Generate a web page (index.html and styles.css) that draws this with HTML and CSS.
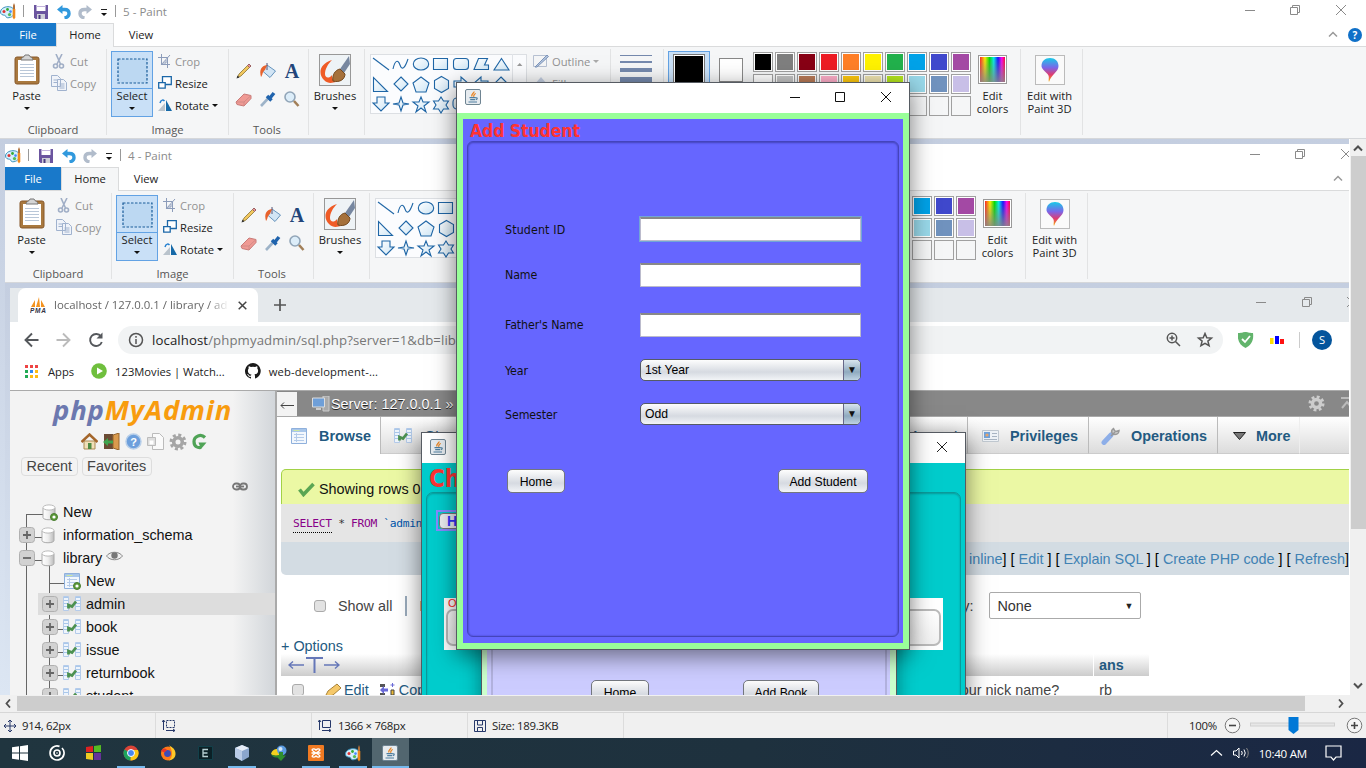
FILE: index.html
```html
<!DOCTYPE html>
<html lang="en">
<head>
<meta charset="utf-8">
<title>5 - Paint</title>
<link rel="stylesheet" href="styles.css">
</head>
<body>
<svg class="defs" width="0" height="0">
  <defs>
    <linearGradient id="gBlue" x1="0" y1="0" x2="1" y2="1"><stop offset="0" stop-color="#fff"/><stop offset="1" stop-color="#cfe6f5"/></linearGradient>
    <linearGradient id="gRain" x1="0" x2="1" y1="0" y2="0"><stop offset="0" stop-color="#f22"/><stop offset=".2" stop-color="#fe0"/><stop offset=".38" stop-color="#0d0"/><stop offset=".55" stop-color="#0ee"/><stop offset=".72" stop-color="#11f"/><stop offset=".87" stop-color="#f0e"/><stop offset="1" stop-color="#f03"/></linearGradient>
    <linearGradient id="gGrey" x1="0" x2="0" y1="0" y2="1"><stop offset="0" stop-color="#888" stop-opacity="0"/><stop offset="1" stop-color="#888" stop-opacity=".85"/></linearGradient>
    <linearGradient id="g3d" x1="0" x2="0" y1="0" y2="1"><stop offset="0" stop-color="#18cbe8"/><stop offset=".4" stop-color="#7b66e8"/><stop offset=".7" stop-color="#e23b6e"/><stop offset="1" stop-color="#f7b500"/></linearGradient>
    <linearGradient id="gCyl" x1="0" x2="1" y1="0" y2="0"><stop offset="0" stop-color="#fff"/><stop offset=".5" stop-color="#eee"/><stop offset="1" stop-color="#bbb"/></linearGradient>
  </defs>
  <symbol id="paint" viewBox="0 0 17 17"><path d="M.5 9C.5 6 4 3.700 8 3.700s6.500 2 6.500 5.300-3 5.800-6.800 5.800c-2.200 0-1.400-2.200-3-2.500C2.500 12 .5 11.500.5 9z" fill="#d5effc" stroke="#3c93bd"/><circle cx="4" cy="8.500" r="1.500" fill="#d33"/><circle cx="7.500" cy="6.500" r="1.400" fill="#3a3"/><circle cx="10.500" cy="8.600" r="1.300" fill="#48f"/><circle cx="9.500" cy="11.600" r="1.600" fill="#5b5"/><path d="M13 6V2.500l1-2.500 1 2.500V6z" fill="#b0703a"/><path d="M12.700 6h2.600v8.500l-1.300 2-1.300-2z" fill="#f08a1c"/></symbol>
  <symbol id="save" viewBox="0 0 14 14"><path d="M0 0h14v14H1.500L0 12.500z" fill="#6b559f"/><path d="M2.500 0h9v6h-9z" fill="#fff"/><path d="M2.500 1h9v1h-9z" fill="#c3b3dd"/><path d="M3 9h8v5H3z" fill="#cfd0d8"/><path d="M4.500 10h2v4h-2z" fill="#483a80"/></symbol>
  <symbol id="undo" viewBox="0 0 14 14"><path d="M3 4.500h4.500c3.500 0 4.500 2 4.500 4 0 2.500-2 4-4.500 4.500" fill="none" stroke="currentColor" stroke-width="3.400"/><path d="M0 4.500 5.500 0v9z" fill="currentColor"/></symbol>
  <symbol id="java" viewBox="0 0 16 16"><rect x=".5" y=".5" width="15" height="15" rx="1.500" fill="#e6ebef" stroke="#6f8492"/><path d="M9 2.500c.5 2-3.500 2.500-2 5M10.800 4.500C8 5.500 9.500 6 8.500 7.800" fill="none" stroke="#e8801c" stroke-width="1.300"/><path d="M4.500 8.700h6.200M5.200 10.700h5M3.500 13h8.500M10.700 9c2-.8 2 1.300.2 1.700" fill="none" stroke="#4f7fa0" stroke-width="1.200"/></symbol>
  <symbol id="cyl" viewBox="0 0 15 17"><path d="M1 4v9.500C1 16.500 13 16.500 13 13.500V4z" fill="url(#gCyl)" stroke="#aaa"/><ellipse cx="7" cy="3.500" rx="6" ry="2.600" fill="#fff" stroke="#bbb"/></symbol>
  <symbol id="tbl" viewBox="0 0 17 17"><path d="M.5.5h15v15H.5z" fill="#f2f7fd" stroke="#8fb0dc"/><path d="M1 1h14v3H1z" fill="#a8c6ea"/><path d="M3 6.500h10M3 9.500h10M3 12.500h10M5.500 5v9" stroke="#b4cbe9"/><path d="M2.500 2.500h6" stroke="#cde8a0"/></symbol>
  <symbol id="addb" viewBox="0 0 8 8"><circle cx="4" cy="4" r="3.500" fill="#5b9a3a" stroke="#4a7d2f"/><circle cx="4" cy="4" r="1.600" fill="#fff"/></symbol>
  <symbol id="rel" viewBox="0 0 18 16"><path d="M.5.5h5v14h-5zM12.500.5h5v14h-5z" fill="#eef4fc" stroke="#b4cbea"/><path d="M1 4.500h4M1 7.500h4M1 10.500h4M13 4.500h4M13 7.500h4M13 10.500h4M1 1.500h4M13 1.500h4" stroke="#a9c8ea"/><path d="M5.500 12.500V9l3.500 1.500 4-5" fill="none" stroke="#4c9150" stroke-width="2.800"/></symbol>
  <symbol id="plus" viewBox="0 0 16 16"><rect x=".5" y=".5" width="15" height="15" rx="3" fill="#d2d2d2" stroke="#b0b0b0"/><path d="M4 8h8M8 4v8" stroke="#666" stroke-width="1.800"/></symbol>
  <symbol id="minus" viewBox="0 0 16 16"><rect x=".5" y=".5" width="15" height="15" rx="3" fill="#d2d2d2" stroke="#b0b0b0"/><path d="M4 8h8" stroke="#666" stroke-width="1.800"/></symbol>
  <symbol id="gear" viewBox="0 0 18 18"><circle cx="9" cy="9" r="7" fill="none" stroke="currentColor" stroke-width="3" stroke-dasharray="3 2.500"/><circle cx="9" cy="9" r="4.300" fill="none" stroke="currentColor" stroke-width="3.600"/></symbol>
</svg>

<template id="paint-top">
  <div class="titlebar">
    <svg class="i-paint" width="17" height="17"><use href="#paint"/></svg>
    <span class="bar b1"></span>
    <svg class="i-save" width="14" height="14"><use href="#save"/></svg>
    <svg class="i-undo" width="14" height="14"><use href="#undo"/></svg>
    <svg class="i-redo" width="14" height="14" viewBox="0 0 14 14"><g transform="matrix(-1 0 0 1 14 0)"><use href="#undo" width="14" height="14"/></g></svg>
    <svg class="i-more" width="8" height="8"><path d="M1 .5h6" stroke="#222"/><path d="M1 4h6L4 7z" fill="#111"/></svg>
    <span class="bar b2"></span>
    <span class="wtitle"></span>
    <svg class="wctl" width="102" height="12" fill="none" stroke="#8a8a8a"><path d="M0 6.500h10M45.500 3.500h7v7h-7zM47.500 3V1.500h7v7h-2M91 1l10 10M101 1 91 11"/></svg>
  </div>
  <div class="tabs"><span class="tab file">File</span><span class="tab home">Home</span><span class="tab view">View</span>
    <span class="tabright"><svg width="10" height="7"><path d="M1 5.500 5 1.500 9 5.500" fill="none" stroke="#999" stroke-width="1.500"/></svg><span class="help">?</span></span></div>
  <div class="ribbon">
    <div class="grp g-clip"><div class="body">
      <div class="big paste"><svg width="26" height="32" viewBox="0 0 26 32"><rect x="1" y="3" width="24" height="27" rx="2" fill="#a9793f" stroke="#87592a"/><path d="M4 6h18v21H4z" fill="#fff"/><path d="M6 10.500h14M6 13.500h14M6 16.500h14M6 19.500h14M6 22.500h14" stroke="#b9c7d8"/><path d="M7 6c0-3 3-2 4-5h4c1 3 4 2 4 5z" fill="#d5d5d5" stroke="#777"/></svg><span>Paste</span><i class="dn"></i></div>
      <div class="col dim"><div class="item"><svg width="16" height="15" viewBox="0 0 16 15" fill="none" stroke="#a0aec6" stroke-width="1.600"><path d="M5 0 9.500 10M11 0 6 10"/><circle cx="4.500" cy="12" r="2"/><circle cx="10.500" cy="12" r="2"/></svg>Cut</div><div class="item"><svg width="16" height="16" viewBox="0 0 16 16" fill="#f0f3f9" stroke="#a0b2ce"><path d="M.5.500h6l3 3v8h-9zM6.500 4.500h6l3 3v8h-9z"/><path d="M2.500 5h4M2.500 7.500h4M8.500 9h5M8.500 11h5M8.500 13h5"/></svg>Copy</div></div>
    </div><div class="cap">Clipboard</div></div>
    <div class="grp g-img"><div class="body">
      <div class="big select"><div class="selicon"><svg width="31" height="26"><rect x="1" y="1" width="29" height="24" fill="#bcd8f2" stroke="#1a5c99" stroke-width="1.200" stroke-dasharray="2.500 1.500"/></svg></div><span>Select</span><i class="dn"></i></div>
      <div class="col"><div class="item dim"><svg width="14" height="14" viewBox="0 0 14 14" fill="none" stroke="#8c9cba"><path d="M3.500 0v10.500H12M0 3.500h9.500V14M3 11 12 1M5 9h3V6"/></svg>Crop</div><div class="item"><svg width="14" height="14" viewBox="0 0 14 14" fill="#fff" stroke="#1b67a8" stroke-width="1.300"><path d="M4.500.7h8.800v7.800H4.500z"/><path d="M.7 6.700h6.500v5.500H.7z"/></svg>Resize</div><div class="item"><svg width="14" height="14" viewBox="0 0 14 14"><path d="M0 13 7 5v8z" fill="#b9c3cc"/><path d="M8 2v11h6z" fill="#1569a8"/><path d="M2 5C3 1 5.500 2 6.500 3" fill="none" stroke="#2680d0" stroke-width="1.500"/></svg>Rotate<i class="dn"></i></div></div>
    </div><div class="cap">Image</div></div>
    <div class="grp g-tools"><div class="body tools">
      <svg width="18" height="18" viewBox="0 0 18 18"><path d="M2.500 15.500 4 12 12.500 3.500l2 2L6 14z" fill="#f1c75e" stroke="#8a7434" stroke-width=".8"/><path d="m12.500 3.500 1.500-1.500 2 2-1.500 1.500z" fill="#e79a9a" stroke="#9b6060"/><path d="m1.500 16.500 1-3 2 2z" fill="#333"/></svg>
      <svg width="18" height="18" viewBox="0 0 18 18"><path d="M8 3 16.500 9 11 15.500 3.500 9z" fill="#d2e5f5" stroke="#6694bd"/><path d="M8 1v7" stroke="#557"/><path d="M8 3C2 4 0 8 2 15c2-2 1-5 4-7z" fill="#e8622c"/></svg>
      <span class="A">A</span>
      <svg width="18" height="18" viewBox="0 0 18 18"><path d="m1 12 8-8 7 1.500v3L9 16l-7-1.500z" fill="#ef9a94" stroke="#c97b78"/><path d="M2 12h7v3.500M9 12l7-6.500" fill="none" stroke="#d28a86"/></svg>
      <svg width="18" height="18" viewBox="0 0 18 18"><path d="M2 16 9.500 8" stroke="#9db3c8" stroke-width="2.600"/><path d="m8 6 4.500 4.500M10.500 8.500 15 3" stroke="#1f63ad" stroke-width="3.500"/></svg>
      <svg width="18" height="18" viewBox="0 0 18 18"><circle cx="7" cy="7" r="5" fill="#dcedf9" stroke="#91a5b8" stroke-width="1.600"/><path d="m11 11 4.500 5" stroke="#a27f58" stroke-width="2.600"/></svg>
    </div><div class="cap">Tools</div></div>
    <div class="grp g-brush"><div class="big"><svg width="33" height="33" viewBox="0 0 33 33"><rect x=".5" y=".5" width="31" height="31" fill="#eef3f6" stroke="#989898"/><path d="M13 6C0 10-1 20 5 26c4 4 8 3 12 2-3-2-4-4-4-7-3 4-7 3-7-1C6 15 9 10 13 6z" fill="#ef5b26"/><path d="M30 2 21 15l4 4 6-9z" fill="#7787a0"/><path d="M14 27c-1-6 2-11 7-12l5 5c0 5-5 9-12 7z" fill="#a5713c" stroke="#74491f"/></svg><span>Brushes</span><i class="dn"></i></div></div>
    <div class="grp g-shapes"><svg class="gallery" width="157" height="60" viewBox="0 0 157 60"><rect x=".5" y=".5" width="156" height="59" fill="#fbfcfe" stroke="#dcdfe3"/><path d="M142.500 0v60" stroke="#e1e4e8"/><path d="m147 12 2.700-3 2.700 3z" fill="#999"/>
      <g fill="url(#gBlue)" stroke="#1f66a6" stroke-width="1.100"><path d="M3 4 19 16" /><path d="M23 15c2-9 5-10 7-4s5 3 8-6" fill="none"/><ellipse cx="51" cy="10" rx="7.700" ry="6"/><path d="M63.500 4.500h14v11h-14z"/><rect x="83.500" y="4.500" width="15" height="11" rx="3"/><path d="M104 15.500 108.500 4.500h9l-3 6.500h4v4.500z"/><path d="M131.500 4.500 139 16h-15z"/>
      <path d="M3.500 23.500v14h14z"/><path d="m31 23 7 7-7 7-7-7z"/><path d="m51 23 8 6-3 9H46l-3-9z"/><path d="m71.500 22.500 7 4v8l-7 4-7-4v-8z"/><path d="M84 27h7v-4l8 7-8 7v-4h-7z"/><path d="M118 27h-7v-4l-8 7 8 7v-4h7z"/><path d="m131 23 7 7h-4v7h-6v-7h-4z"/>
      <path d="M7 43h8v6h4l-8 8-8-8h4z"/><path d="m31 43 2 6 6 1-6 1-2 6-2-6-6-1 6-1z"/><path d="m51 43 2 5h6l-5 4 2 6-5-4-5 4 2-6-5-4h6z"/><path d="m71 43 2.500 4h5L76 51l2.500 4h-5L71 59l-2.500-4h-5L66 51l-2.500-4h5z"/><rect x="83" y="44" width="15" height="11" rx="4"/></g></svg>
      <div class="col dim out"><div class="item"><svg width="16" height="14" viewBox="0 0 16 14"><path d="M.5 1.500h13v11H.5z" fill="none" stroke="#b7c1d2"/><path d="M2 13 14 1l1.500 1.500L4 13z" fill="#b5c6de" stroke="#7d95bb"/></svg>Outline<i class="dn"></i></div><div class="item"><svg width="16" height="14" viewBox="0 0 16 14"><path d="m1 9 7-8 6 7-5 5z" fill="#c2cde0"/></svg>Fill<i class="dn"></i></div></div></div>
    <div class="grp g-size"><i style="height:1px"></i><i style="height:2px"></i><i style="height:4px"></i><i style="height:8px"></i></div>
    <div class="grp g-colors"><div class="c1"><b></b></div><div class="c2"></div><div class="pal"></div><div class="big edit"><svg width="29" height="30"><rect x=".5" y=".5" width="28" height="28" fill="#fff" stroke="#999"/><path d="M2 2h25v25H2z" fill="url(#gRain)"/><path d="M2 2h25v25H2z" fill="url(#gGrey)"/></svg><span>Edit<br>colors</span></div></div>
    <div class="grp g-3d"><div class="big edit"><svg width="30" height="30"><rect x=".5" y=".5" width="29" height="29" fill="#fafafa" stroke="#bbb"/><path d="M15 3c5 0 8.500 3 8.500 8 0 6-7 8-9.500 16-1-3 1-5-1.500-8S6.500 14 6.500 11C6.500 6 10 3 15 3z" fill="url(#g3d)"/></svg><span>Edit with<br>Paint 3D</span></div></div>
  </div>
</template>

<div class="paint outer" data-title="5 - Paint">
  <div class="top"></div>
  <div class="workspace">
    <div class="canvas">
      <div class="paint inner" data-title="4 - Paint">
        <div class="top"></div>
        <div class="workspace2">
          <div class="chrome">
            <div class="strip">
              <div class="ctab"><svg width="17" height="17" viewBox="0 0 17 17"><path d="M1 10 5 3v7zM6 10 9 0l1 10zM11 10V3l4 7z" fill="#f3931f"/><text x="0" y="16" class="pma" textLength="16">PMA</text></svg><span class="ct">localhost / 127.0.0.1 / library / ad</span><svg width="9" height="9"><path d="m.700.700 7.600 7.600M8.300.700.700 8.300" stroke="#444" stroke-width="1.500"/></svg></div>
              <svg class="newtab" width="12" height="12"><path d="M6 0v12M0 6h12" stroke="#555" stroke-width="1.700"/></svg>
              <svg class="wctl" width="102" height="12" fill="none" stroke="#8a8a8a"><path d="M0 6.500h10M46.500 3.500h7v7h-7zM48.500 3V1.500h7v7h-2M91 1l10 10M101 1 91 11"/></svg>
            </div>
            <div class="toolbar">
              <svg width="86" height="18" viewBox="0 0 86 18" fill="none" stroke="#55585c" stroke-width="1.900"><path d="M14.500 9H2M8 2.500 1.500 9 8 15.500"/><path d="M32.500 9H45M39 2.500 45.500 9 39 15.500" stroke="#bbb"/><path d="M77 5.500a6 6 0 1 0 .8 5.500"/><path d="M72.500 7.500h6v-6z" fill="#55585c" stroke="none"/></svg>
              <div class="url"><svg width="16" height="16" fill="none" stroke="#555" stroke-width="1.500"><circle cx="8" cy="8" r="6.500"/><path d="M8 7v5M8 4v1.700"/></svg><span><b>localhost</b>/phpmyadmin/sql.php?server=1&amp;db=library&amp;table=admin&amp;pos=0</span>
                <svg class="uicons" width="48" height="16" viewBox="0 0 48 16" fill="none" stroke="#555" stroke-width="1.500"><circle cx="6" cy="6" r="4.700"/><path d="m9.500 9.500 4.500 4.500M3.500 6h5M6 3.500v5"/><path d="m39 1.500 1.800 4.200 4.700.4-3.600 3 1.200 4.600L39 11.300l-4.100 2.400 1.200-4.600-3.600-3 4.700-.4z"/></svg></div>
              <svg class="exts" width="64" height="18" viewBox="0 0 64 18"><path d="M0 2c5 0 5-1 7.500-1S10 2 15 2c1 8-2 12-7.500 15C2 14-1 10 0 2z" fill="#62b46c"/><path d="m4 8 3 3 5-6" fill="none" stroke="#fff" stroke-width="1.800"/><path d="M32 7h3.500v6H32z" fill="#fd0"/><path d="M37 5h4v8h-4z" fill="#00f"/><path d="M42 8h4v5h-4z" fill="#f11"/><path d="M61.500 1v16" stroke="#ccc"/></svg>
              <span class="avatar">S</span>
            </div>
            <div class="bookmarks">
              <svg width="13" height="13"><path d="M0 0h3v3H0zM5 0h3v3H5zM10 0h3v3h-3z" fill="#e44"/><path d="M0 5h3v3H0z" fill="#2a5"/><path d="M5 5h3v3H5z" fill="#38e"/><path d="M10 5h3v3h-3zM5 10h3v3H5zM10 10h3v3h-3z" fill="#fb1"/><path d="M0 10h3v3H0z" fill="#2a5"/></svg><span class="bm1">Apps</span>
              <svg width="16" height="16"><circle cx="8" cy="8" r="7.800" fill="#6fbf3d"/><path d="m6 4.500 6 3.500-6 3.500z" fill="#fff"/></svg><span class="bm2">123Movies | Watch...</span>
              <svg width="16" height="16" viewBox="0 0 16 16"><path d="M8 0a8 8 0 0 0-2.500 15.600c.4 0 .5-.2.500-.4v-1.400c-2.200.5-2.700-1-2.700-1-.4-.9-.9-1.200-.9-1.200-.7-.5.1-.5.1-.5.800.1 1.200.8 1.200.8.700 1.300 1.900.9 2.300.7.100-.5.300-.9.500-1.100-1.800-.2-3.600-.9-3.600-4 0-.9.300-1.600.8-2.100-.1-.2-.4-1 .1-2.100 0 0 .7-.2 2.200.8a7.500 7.500 0 0 1 4 0c1.500-1 2.200-.8 2.200-.8.400 1.100.2 1.900.1 2.100.5.600.8 1.300.8 2.100 0 3.100-1.900 3.700-3.700 3.900.3.300.6.800.6 1.500v2.200c0 .2.100.5.500.4A8 8 0 0 0 8 0z" fill="#1b1b1b"/></svg><span class="bm3">web-development-...</span>
            </div>
            <div class="page">
              <div class="side">
                <div class="logo"><span class="php">php</span><span class="mya">MyAdmin</span></div>
                <div class="sicons">
                  <svg width="17" height="17" viewBox="0 0 17 17"><path d="M3 8h11v8H3z" fill="#f1dfb8" stroke="#a98a55"/><path d="M.5 9 8.500 1.500 16.500 9" fill="none" stroke="#a4662b" stroke-width="2.500"/><path d="M7 10h3.500v6H7z" fill="#4e8b44"/></svg>
                  <svg width="17" height="17" viewBox="0 0 17 17"><path d="M1 1h9v15H1z" fill="#6a4b34"/><path d="M10 2l6-2v17l-6-2z" fill="#d99a4d" stroke="#95642d"/><path d="M0 9l5-4v2.500h5v3H5V13z" fill="#3fa34d"/></svg>
                  <svg width="17" height="17" viewBox="0 0 17 17"><circle cx="8.500" cy="8.500" r="7.500" fill="#6d9fdc" stroke="#b8cfe9" stroke-width="1.500"/><text x="5.300" y="12.500" class="q">?</text></svg>
                  <svg width="17" height="17" viewBox="0 0 17 17"><path d="M5.500.5h7l4 4v12h-11z" fill="#fafafa" stroke="#bbb"/><path d="M.5 4.500h8v8h-8z" fill="#ddd" stroke="#bbb"/><path d="M2.500 7.500h4v4h-4z" fill="#fff"/></svg>
                  <svg width="18" height="18" color="#a5a5a5"><use href="#gear"/></svg>
                  <svg width="15" height="17" viewBox="0 0 15 17"><path d="M13 4.500C9 .5 2 3 2 8.500S6 15 9 14.500" fill="none" stroke="#4fa356" stroke-width="3.200"/><path d="M6.500 9.500h8L12 12.500l-3 3.500z" fill="#4fa356"/></svg>
                </div>
                <div class="sbtns"><span>Recent</span><span>Favorites</span></div>
                <div class="link"><svg width="16" height="9" viewBox="0 0 16 9" fill="none" stroke="#777" stroke-width="1.800"><rect x="1" y="1.500" width="7" height="6" rx="3"/><rect x="8" y="1.500" width="7" height="6" rx="3"/><path d="M4 4.500h8"/></svg></div>
                <div class="tree">
                  <svg class="lines" width="60" height="194" stroke="#666" fill="none"><path d="M16.500 13.500h18M16.500 13v181M39.500 60v134M25 36.500h10M25 59.500h10M39.500 82.500h16M48 105.500h6M48 128.500h6M48 151.500h6M48 174.500h6"/></svg>
                  <div class="tr r1"><svg width="16" height="17"><use href="#cyl" width="15" height="17"/><use href="#addb" x="8" y="9" width="8" height="8"/></svg>New</div>
                  <div class="tr r0"><svg width="16" height="16"><use href="#plus"/></svg><svg width="15" height="17"><use href="#cyl"/></svg>information_schema</div>
                  <div class="tr r0"><svg width="16" height="16"><use href="#minus"/></svg><svg width="15" height="17"><use href="#cyl"/></svg>library<svg class="eye" width="17" height="10" viewBox="0 0 17 10"><path d="M.5 5C4 0 13 0 16.500 5 13 10 4 10 .5 5z" fill="#eee" stroke="#888"/><circle cx="8.500" cy="4.500" r="3.200" fill="#777"/></svg></div>
                  <div class="tr r3"><svg width="17" height="17"><use href="#tbl"/><use href="#addb" x="9" y="9" width="8" height="8"/></svg>New</div>
                  <div class="tr r2 on"><svg width="16" height="16"><use href="#plus"/></svg><svg width="18" height="16"><use href="#rel"/></svg>admin</div>
                  <div class="tr r2"><svg width="16" height="16"><use href="#plus"/></svg><svg width="18" height="16"><use href="#rel"/></svg>book</div>
                  <div class="tr r2"><svg width="16" height="16"><use href="#plus"/></svg><svg width="18" height="16"><use href="#rel"/></svg>issue</div>
                  <div class="tr r2"><svg width="16" height="16"><use href="#plus"/></svg><svg width="18" height="16"><use href="#rel"/></svg>returnbook</div>
                  <div class="tr r2"><svg width="16" height="16"><use href="#plus"/></svg><svg width="18" height="16"><use href="#rel"/></svg>student</div>
                </div>
              </div>
              <div class="main">
                <div class="server"><span class="back"><svg width="14" height="9" fill="none" stroke="#444"><path d="M1 4.500h13M4 1.500 1 4.500l3 3"/></svg></span><svg class="pc" width="18" height="16" viewBox="0 0 18 16"><path d="M11 0h6v15h-6z" fill="#aaa" stroke="#ccc"/><path d="M.5 2h12v9H.5z" fill="#6f9fd8" stroke="#ddd"/><path d="M4 12h5v2H4z" fill="#ccc"/></svg><span>Server: 127.0.0.1 »</span><svg class="sg" width="17" height="17" color="#ccc"><use href="#gear"/></svg><svg class="up" width="14" height="14" fill="none" stroke="#bbb" stroke-width="2"><path d="M1 1h12M2 11l5-6 5 6"/></svg></div>
                <div class="mtabs">
                  <div class="mt act"><svg width="16" height="16"><use href="#tbl" width="17" height="17"/></svg>Browse</div>
                  <div class="mt st"><svg width="18" height="16"><use href="#rel"/></svg>Structure</div>
                  <div class="mt im">Import</div>
                  <div class="mt pr"><svg width="17" height="12"><path d="M.5.5h16v11H.5z" fill="#eef2f6" stroke="#c0c8d0"/><path d="M2 2h6v6H2z" fill="#6fa3dc"/><circle cx="5" cy="5" r="1.600" fill="#e8a66c"/><path d="M10 3.500h5M10 6.500h5M2 9.500h13" stroke="#a8b4c2"/></svg>Privileges</div>
                  <div class="mt op"><svg width="19" height="18" viewBox="0 0 19 18"><path d="M3 15.500 10 8" stroke="#8daee8" stroke-width="5" stroke-linecap="round"/><path d="m10 9 4-4M12.500 1.500C9 4 11 7.500 14 7.500s4-2.500 4-4l-3 1-1.500-1z" stroke="#999" stroke-width="1.500" fill="#ccc"/></svg>Operations</div>
                  <div class="mt mo"><svg width="13" height="8"><path d="M.5.5h12l-6 7z" fill="#777" stroke="#222"/></svg>More</div>
                  <div class="mt rest"></div>
                </div>
                <div class="ok"><svg width="17" height="15"><path d="m1.500 7.500 4 5L15.500 2" fill="none" stroke="#5aa653" stroke-width="3.600"/></svg>Showing rows 0 - 1 (2 total)</div>
                <div class="sql"><u>SELECT</u> <em>*</em> FROM <s>`admin`</s></div>
                <div class="links"><span>[ <a>Edit inline</a>] [ <a>Edit</a> ] [ <a>Explain SQL</a> ] [ <a>Create PHP code</a> ] [ <a>Refresh</a>]</span></div>
                <div class="show"><i class="cb"></i><span>Show all</span><i class="vb"></i><span class="nr">Number of rows:</span><span class="sk">Sort by key:</span><span class="dd">None<i>▼</i></span></div>
                <div class="opt">+ Options</div>
                <div class="th"><svg width="52" height="18" viewBox="0 0 52 18" fill="none" stroke="#6577b8" stroke-width="1.400"><path d="M1 9h15M5 5.500 1 9l4 3.500M36 9h15M47 5.500 51 9l-4 3.500"/><path d="M18 2h17M26.500 2v15" stroke-width="2"/></svg><span class="q1"></span><span class="ans">ans</span></div>
                <div class="td"><i class="cb"></i><svg class="pen" width="18" height="15" viewBox="0 0 18 15"><path d="M1 14 4 8l9-7 4 4-8 7z" fill="#f5c869" stroke="#a98338"/></svg><span>Edit</span><svg class="cp" width="16" height="14"><path d="M1 1h5v3H1zM1 10h5v3H1z" fill="#555"/><path d="M3 7h6" stroke="#6a6ad8" stroke-width="3"/><path d="M1 7l4-4v8z" fill="#6a6ad8"/><path d="M13.500 0v4M11.500 2h4" stroke="#6a6ad8"/><path d="M12 7h3v5h-3z" fill="#eb3" stroke="#444"/></svg><span>Copy</span><span class="nick">your nick name?</span><span>rb</span></div>
              </div>
            </div>
          </div>
        </div>
      </div>
      <section class="win check"><header><svg width="16" height="16"><use href="#java"/></svg><svg class="cx" width="12" height="12"><path d="m1 1 10 10M11 1 1 11" stroke="#222" fill="none"/></svg></header>
        <div class="check-body"><h2>Check</h2><div class="panel"><span class="hb"><b>Home</b></span><div class="order"><small>Order</small><div class="obox"><i></i></div></div></div></div></section>
      <section class="win book"><div class="book-panel"><button class="jb">Home</button><button class="jb">Add Book</button></div></section>
    </div>
    <div class="vscroll"><svg width="10" height="7"><path d="M1 5.500 5 1.500 9 5.500" fill="none" stroke="#505050" stroke-width="2"/></svg><i></i><svg width="10" height="7"><path d="M1 1.500 5 5.500 9 1.500" fill="none" stroke="#505050" stroke-width="2"/></svg></div>
  </div>
  <div class="hscroll"><svg width="6" height="9"><path d="M5 .5 1.500 4.500 5 8.500" fill="none" stroke="#505050" stroke-width="1.800"/></svg><i></i><svg width="6" height="9"><path d="M1 .5 4.500 4.500 1 8.500" fill="none" stroke="#505050" stroke-width="1.800"/></svg></div>
  <div class="status">
    <div><svg width="12" height="12" fill="none" stroke="#26386a"><path d="M6 0v12M0 6h12M4 2l2-2 2 2M4 10l2 2 2-2M2 4 0 6l2 2M10 4l2 2-2 2"/></svg>914, 62px</div>
    <div><svg width="14" height="13" fill="none" stroke="#26386a"><path d="M1.500 11V1M0 3l1.500-2L3 3M4 11.500h9M11 10l2 1.500-2 1.500"/><path d="M4.500 1.500h8v7h-8z" stroke-dasharray="2 1"/></svg></div>
    <div><svg width="14" height="13" fill="none" stroke="#26386a"><path d="M1.500 11V1M0 3l1.500-2L3 3M4 11.500h9M11 10l2 1.500-2 1.500M4.500 1.500h8v7h-8z"/></svg>1366 × 768px</div>
    <div><svg width="12" height="12" fill="none" stroke="#26386a"><path d="M.5.5h11v11H.5zM3.500 1v4h5V1M3.500 11V7.500h5V11"/></svg>Size: 189.3KB</div>
    <div class="zoom"><span>100%</span><svg width="139" height="17" viewBox="0 0 139 17"><circle cx="8.500" cy="8.500" r="7.300" fill="#f5f5f5" stroke="#777"/><path d="M5 8.500h7" stroke="#444" stroke-width="1.600"/><rect x="26.500" y="6" width="84" height="3" fill="#e7e7e7" stroke="#d0d0d0"/><path d="M64.500 0h10v13l-5 4-5-4z" fill="#0078d7"/><circle cx="130.500" cy="8.500" r="7.300" fill="#f5f5f5" stroke="#777"/><path d="M127 8.500h7M130.500 5v7" stroke="#444" stroke-width="1.600"/></svg></div>
  </div>
</div>

<section class="win student">
  <header><svg width="16" height="16"><use href="#java"/></svg><svg class="ctl" width="103" height="12" fill="none" stroke="#111"><path d="M0 6.500h10M45.500 1.500h9v9h-9zM91 1l10 10M101 1 91 11"/></svg></header>
  <div class="stu-body"><h1>Add Student</h1>
    <div class="panel">
      <label>Student ID</label><input class="focus" type="text">
      <label>Name</label><input type="text">
      <label>Father's Name</label><input type="text">
      <label>Year</label><div class="combo">1st Year<i>▼</i></div>
      <label>Semester</label><div class="combo">Odd<i>▼</i></div>
      <div class="actions"><button class="jb">Home</button><button class="jb">Add Student</button></div>
    </div></div>
</section>

<div class="taskbar">
  <span><svg width="16" height="16" fill="#fff"><path d="M0 2.300 7 1.300v6.200H0zM8 1.200 16 0v7.500H8zM0 8.500h7v6.200l-7-1zM8 8.500h8V16l-8-1.200z"/></svg></span>
  <span><svg width="16" height="16" fill="none" stroke="#fff" stroke-width="1.700"><path d="M10.500 1.400A7 7 0 1 0 13 3"/><circle cx="8" cy="8" r="3"/><path d="M8 7.500v1"/></svg></span>
  <span><svg width="16" height="16"><path d="M0 2l7-1v6H0z" fill="#d22"/><path d="M8 1l7-1v7H8z" fill="#5b2"/><path d="M0 8h7v7l-7-1z" fill="#ec2"/><path d="M8 8h7v7H8z" fill="#639"/></svg></span>
  <span class="u"><svg width="16" height="16" viewBox="0 0 16 16"><circle cx="8" cy="8" r="7.500" fill="#dc4437"/><path d="M8 8 1.300 4.500A7.500 7.500 0 0 0 7.500 15.500z" fill="#1da35c"/><path d="m8 8-.5 7.500A7.500 7.500 0 0 0 15 5H8z" fill="#fbc815"/><circle cx="8" cy="8" r="3.500" fill="#4688f1" stroke="#fff"/></svg></span>
  <span><svg width="16" height="16" viewBox="0 0 16 16"><circle cx="8" cy="8.500" r="7" fill="#ff7a18"/><path d="M9 0c2 2 6 3 6.500 8S12 15 9 15.500C13 12 13 6 9 0z" fill="#ffc928"/><circle cx="7.500" cy="8.500" r="3.400" fill="#3b4cb8"/><path d="M1 6c2-3 4-3 6-1L4.500 7.500z" fill="#e8352a"/></svg></span>
  <span><svg width="15" height="14"><path d="M.5.5h14v13H.5z" fill="#0b2026" stroke="#12404a"/><path d="M10 3.500H5v7h5M5 7h4.500" stroke="#b7cfd3" fill="none" stroke-width="1.300"/></svg></span>
  <span class="u"><svg width="14" height="16" viewBox="0 0 14 16"><path d="m7 0 7 3v9l-7 4-7-4V3z" fill="#8ba6cd"/><path d="m7 0 7 3-7 3-7-3z" fill="#e7eef8"/><path d="M0 3l7 3v10l-7-4z" fill="#b9cbe6"/></svg></span>
  <span><svg width="17" height="16" viewBox="0 0 17 16"><circle cx="10.500" cy="5.500" r="5" fill="#5b9be0"/><circle cx="9.500" cy="4" r="2" fill="#d5e8fa"/><path d="M0 9c1-4 4-5 6-5 0 4 2 5 4 6-4 1-8 1-10-1z" fill="#f4d21f"/><path d="M0 9c2 2 5 2 8 1V7h4v3.500h3L10 16l-3.500-3.500C3 13 1 11.500 0 9z" fill="#2f8f2c"/></svg></span>
  <span class="u"><svg width="16" height="16"><rect width="16" height="16" rx="1" fill="#f07a22"/><path d="M4 4.500C4 7 12 9 12 11.500M12 4.500C12 7 4 9 4 11.500M4 4.500q2-1.500 4 .5 2-2 4-.5M4 11.500q2 1.500 4-.5 2 2 4 .5M3.500 8h9" fill="none" stroke="#fff" stroke-width="1.400"/></svg></span>
  <span class="u"><svg width="17" height="17"><use href="#paint"/></svg></span>
  <span class="u act"><svg width="16" height="16"><use href="#java"/></svg></span>
  <div class="tray"><svg width="40" height="14" fill="none" stroke="#fff"><path d="m1 9.500 5.500-5 5.500 5" stroke-width="1.200"/><path d="M23.500 5h2.500l3-3v10l-3-3h-2.500zM31.500 5q1.500 2 0 4M34 3.500q2.500 3.500 0 7"/><path d="M36.500 2q3.500 5 0 10" stroke="#888"/></svg><span>10:40 AM</span><svg width="17" height="16" fill="none" stroke="#fff" stroke-width="1.200"><path d="M1 1h15v11h-5l-2.500 3L6 12H1z"/></svg></div>
</div>
<script src="app.js"></script>
</body>
</html>
```
FILE: styles.css
```css
* { box-sizing: border-box; }
body { margin: 0; width: 1366px; height: 768px; overflow: hidden; position: relative; font-family: "Open Sans", "Noto Sans", sans-serif; font-size: 11.2px; color: #222; white-space: nowrap; background: #fff; }
svg { flex: none; display: block; }
i { font-style: normal; }
.defs { position: absolute; }
.paint { width: 1366px; flex: none; }
.outer { height: 738px; display: flex; flex-direction: column; }
.top { height: 139px; background: #fff; }
.titlebar { height: 23px; display: flex; align-items: center; position: relative; }
.i-paint { margin-top: 0; color: #444; }
.bar { width: 1px; height: 12px; background: #999; margin-top: -2px; }
.b1 { margin-left: 6px; }
.i-save { margin-left: 10px; margin-top: 1px; }
.i-undo { margin-left: 9px; color: #3199dd; }
.i-redo { margin-left: 7px; color: #b1bccb; }
.i-more { margin-left: 8px; margin-top: 3px; }
.b2 { margin-left: 7px; }
.wtitle { margin-left: 7px; color: #8c8c8c; font-size: 11.6px; }
.wctl { margin-left: auto; margin-right: 19px; margin-top: -3px; }
.tabs { height: 24px; display: flex; border-bottom: 1px solid #dadbdc; }
.tab { display: flex; justify-content: center; align-items: center; height: 23px; }
.file { width: 56px; background: #1979ca; color: #fff; }
.home { width: 58px; height: 24px; background: #f5f6f7; border: 1px solid #dadbdc; border-bottom: 0; padding-bottom: 2px; }
.view { width: 54px; }
.tabright { margin-left: auto; display: flex; align-items: center; gap: 10px; padding-right: 4px; }
.help { width: 14px; height: 14px; border-radius: 50%; background: #0f70c8; color: #fff; font-weight: 700; font-size: 10px; line-height: 14px; text-align: center; }
.inner .help { visibility: hidden; }
.ribbon { height: 92px; background: #f5f6f7; border-bottom: 1px solid #d5d7da; display: flex; padding-top: 2px; }
.grp { height: 86px; border-right: 1px solid #e2e3e4; display: flex; flex-direction: column; flex: none; }
.body { display: flex; height: 71px; flex: none; }
.cap { text-align: center; line-height: 15px; color: #555; padding-top: 2px; }
.big { display: flex; flex-direction: column; align-items: center; line-height: 13px; }
.dn { width: 0; height: 0; border: 3px solid transparent; border-top-color: #111; border-bottom: 0; }
.big .dn { margin-top: 5px; }
.g-clip { width: 107px; }
.paste { width: 51px; padding: 5px 0 0 2px; }
.paste span { margin-top: 3px; }
.col { display: flex; flex-direction: column; padding-top: 1px; }
.item { height: 22px; display: flex; align-items: center; gap: 3px; }
.dim { color: #929292; }
.dim .dn { border-top-color: #aaa; }
.g-img { width: 122px; padding-left: 4px; }
.select { width: 42px; height: 66px; background: #c9e0f7; border: 1px solid #62a2e4; margin-top: 2px; }
.selicon { width: 40px; height: 37px; border-bottom: 1px solid #62a2e4; padding: 6px 0 0 5px; margin-bottom: 0; }
.g-img .col { padding-left: 5px; }
.g-img .cap { margin-right: 4px; }
.g-tools { width: 80px; }
.g-tools .cap { padding-right: 3px; }
.tools { display: grid; grid-template-columns: repeat(3, 18px); grid-auto-rows: 18px; gap: 10px 6px; padding: 13px 0 0 6px; }
.A { font: 700 20px/18px "Liberation Serif", serif; color: #22457a; text-align: center; }
.g-brush { width: 56px; padding: 5px 3px 0 0; }
.g-brush .big span { margin-top: 2px; }
.g-shapes { width: 246px; flex-direction: row; padding: 5px 0 0 5px; }
.out { padding: 0 0 0 6px; margin-top: -4px; }
.g-size { width: 53px; padding: 6px 0 0 9px; gap: 5px; }
.g-size i { width: 32px; background: #7589ad; }
.g-colors { width: 357px; flex-direction: row; }
.c1 { width: 42px; height: 70px; margin: 2px 0 0 4px; border: 1px solid #62a2e4; background: #c9e0f7; padding: 2px 4px; }
.c1 b { display: block; width: 32px; height: 32px; background: #000; border: 1px solid #777; box-shadow: inset 0 0 0 1px #fff; }
.c2 { width: 24px; height: 24px; margin: 9px 0 0 9px; border: 1px solid #888; background: #fff; }
.pal { display: grid; grid-template-columns: repeat(10, 20px); grid-auto-rows: 20px; gap: 2px; margin: 3px 0 0 10px; height: 64px; }
.pal i { border: 1px solid #a0a0a0; box-shadow: inset 0 0 0 1px #fff; }
.pal i.e { box-shadow: none; }
.edit { text-align: center; padding-top: 6px; }
.edit span { margin-top: 4px; }
.g-colors .edit { width: 43px; margin-left: 0; }
.g-3d { width: 62px; padding-right: 4px; }
.workspace { height: 556px; display: flex; background: linear-gradient(#c4cee0, #dce6f3); padding: 5px 0 0 5px; }
.canvas { width: 1344px; height: 551px; overflow: hidden; position: relative; background: #fff; }
.workspace2 { height: 412px; padding: 5px 0 0 5px; background: linear-gradient(#c4cee0, #dce6f3); }
.chrome { width: 1366px; height: 407px; background: #fff; }
.strip { height: 34px; background: #e5e9ec; display: flex; padding-left: 8px; align-items: center; }
.ctab { width: 240px; height: 34px; background: #fff; border-radius: 8px 8px 0 0; display: flex; align-items: center; padding-left: 12px; }
.pma { font: italic 700 6.5px "Liberation Sans", sans-serif; fill: #334; }
.q { font: 700 11px "Liberation Sans", sans-serif; fill: #fff; }
.ct { width: 175px; margin: 0 9px 0 7px; overflow: hidden; color: #666; font-size: 11.4px; padding-bottom: 2px; -webkit-mask-image: linear-gradient(90deg, #000 88%, transparent); }
.newtab { margin-left: 16px; }
.strip .wctl { margin-right: 18px; margin-top: -6px; }
.toolbar { height: 36px; display: flex; align-items: center; padding-left: 14px; }
.url { width: 1105px; height: 28px; border-radius: 14px; margin-left: 8px; background: #f1f3f4; display: flex; align-items: center; padding-left: 10px; font-size: 13.2px; color: #777; }
.url span { margin-left: 8px; letter-spacing: .1px; }
.url b { font-weight: 400; color: #222; }
.uicons { margin-left: auto; margin-right: 9px; }
.exts { margin-left: 15px; }
.avatar { width: 20px; height: 20px; border-radius: 50%; background: #04559c; color: #fff; text-align: center; line-height: 20px; margin-left: 10px; }
.bookmarks { height: 32px; display: flex; align-items: center; padding: 0 0 6px 15px; }
.bm1 { margin: 0 17px 0 10px; } .bm2 { margin: 0 20px 0 8px; } .bm3 { margin-left: 8px; letter-spacing: .15px; }
.page { height: 305px; display: flex; overflow: hidden; border-top: 1px solid #aaa; font: 14.4px "Liberation Sans", Arial, sans-serif; }
.side { width: 265px; background: linear-gradient(90deg, #f3f3f3 84%, #d2d6da); display: flex; flex-direction: column; }
.side > div { flex: none; }
.logo { font: italic 700 27.500px/38px "Open Sans", sans-serif; height: 42px; padding-left: 43px; letter-spacing: .8px; }
.php { color: #6c78af; } .mya { color: #f89c0e; }
.sicons { display: flex; gap: 5px; padding-left: 71px; height: 18px; }
.sbtns { display: flex; gap: 4px; padding: 6px 0 0 11px; height: 25px; }
.sbtns span { border: 1px solid #ddd; border-radius: 4px; padding: 0 4.500px; height: 19px; line-height: 17px; color: #444; }
.link { height: 25px; padding: 6px 0 0 222px; }
.tree { position: relative; padding-top: 0; }
.lines { position: absolute; left: 0; top: 0; }
.tr { height: 22.900px; display: flex; align-items: center; position: relative; color: #111; }
.r1 { padding-left: 32px; gap: 5px; } .r0 { padding-left: 9px; gap: 6px; }
.r3 { padding-left: 54px; gap: 5px; } .r2 { padding-left: 4px; margin-left: 28px; gap: 5px; }
.r0 svg + svg { margin-right: 1px; }
.on { background: #ddd; }
.tr .eye.eye { margin: -4px 0 0 -2px; }
.main { width: 1101px; border-left: 2px solid #aaa; overflow: hidden; }
.server { height: 26px; background: #888; border-bottom: 1px solid #aaa; display: flex; color: #fff; text-shadow: 0 1px 0 #222; align-items: center; }
.back { width: 20px; height: 24px; background: #f3f3f3; padding: 9px 0 0 3px; }
.pc { margin-left: 15px; margin-right: 1px; }
.sg { margin-left: 855px; } .up { margin-left: 15px; }
.mtabs { height: 37px; display: flex; font-weight: 700; color: #235a81; }
.mt { height: 37px; display: flex; align-items: center; background: linear-gradient(#fff, #dcdcdc); border-right: 1px solid #bbb; border-bottom: 1px solid #ccc; flex: none; padding-top: 1px; }
.act.mt { width: 104px; background: #fff; border-bottom: 0; padding-left: 14px; gap: 12px; }
.st { width: 400px; padding-left: 13px; gap: 13px; }
.im { width: 187px; justify-content: flex-end; padding-right: 9px; }
.pr { width: 121px; padding-left: 14px; gap: 11px; }
.op { width: 129px; padding-left: 12px; gap: 11px; }
.mo { width: 82px; padding-left: 15px; gap: 10px; border-right-color: #eee; }
.rest { width: 80px; }
.ok { margin: 15px 0 0 4px; height: 35px; background: #ebf8a4; border: 1px solid #a2d246; border-bottom: 0; border-radius: 5px 5px 0 0; display: flex; align-items: center; gap: 4px; padding: 4px 0 0 16px; color: #111; }
.sql { margin-left: 4px; height: 38px; background: #e5e5e5; font: 11.300px/40px "DejaVu Sans Mono", monospace; padding-left: 12px; color: #808; letter-spacing: -.35px; overflow: hidden; }
.sql u { text-decoration: none; border-bottom: 1px dotted #000; padding-bottom: 2px; } .sql em { font-style: normal; color: #333; } .sql s { text-decoration: none; color: #05a; }
.links { margin-left: 4px; height: 33px; background: #d3dce3; border-radius: 0 0 0 5px; display: flex; justify-content: flex-end; padding-right: 27px; line-height: 34px; color: #000; }
.links a { color: #4182b3; }
.show { display: flex; align-items: center; height: 61px; padding-left: 37px; color: #444; }
.cb { width: 12px; height: 12px; border: 1px solid #aaa; border-radius: 3px; background: #e2e2e2; }
.show span { margin-left: 12px; } .show .vb { width: 2px; height: 20px; background: #9ab; margin-left: 13px; }
.nr { width: 452px; } .sk { width: 90px; text-align: right; }
.show .dd { width: 152px; height: 27px; border: 1px solid #aaa; border-radius: 2px; padding: 0 7px; display: flex; align-items: center; justify-content: space-between; margin-left: 16px; color: #333; }
.dd i { font-size: 9px; color: #222; }
.opt { margin-left: 4px; height: 18px; line-height: 20px; color: #235a81; }
.th { margin-left: 4px; height: 22px; width: 868px; display: flex; align-items: center; padding-left: 7px; background: linear-gradient(#fff, #ccc); }
.th .q1 { width: 754px; border-right: 1px solid #fff; height: 22px; }
.ans { color: #235a81; font-weight: 700; margin-left: 5px; }
.td { display: flex; align-items: center; height: 28px; padding-left: 15px; color: #555; }
.pen { margin-left: 20px; margin-right: 2px; } .cp { margin: 0 4px 0 10px; }
.td span { color: #235a81; } .td .nick { margin: 0 40px 0 auto; color: #444; } .td span:last-child { color: #444; margin-right: 264px; }
.win { position: absolute; border: 1px solid #565b62; box-shadow: 0 6px 22px rgba(0,0,0,.5); }
.win header { background: #fff; height: 30px; display: flex; align-items: center; padding: 0 13px 2px 8px; justify-content: space-between; }
.cx { margin-right: 4px; }
.check { left: 416px; top: 288px; width: 545px; height: 400px; }
.check-body { background: #0cc; height: 370px; padding: 0 4px; }
h2 { margin: 0; padding-left: 3px; height: 29px; font: 700 24px/33px "DejaVu Sans Condensed", "Noto Sans", sans-serif; font-stretch: condensed; color: #f33; }
.check .panel { height: 300px; border: 1px solid #0a9a9a; box-shadow: inset 0 1px 2px #0a9a9a; border-radius: 7px; padding: 17px 0 0 9px; }
.hb { display: block; width: 88px; height: 21px; border: 2px solid #88f; padding: 1px; }
.hb b { display: block; border: 1px solid #777; border-radius: 4px; line-height: 14px; font-size: 14px; font-family: "Liberation Sans", sans-serif; padding-left: 7px; color: #33f; background: #eceef2; }
.order { width: 499px; height: 52px; margin: 67px 0 0 8px; background: #fff; padding: 0 2px; position: relative; }
.order small { display: block; padding-left: 2px; font: 11px/11px "Liberation Sans", sans-serif; color: #f22; }
.obox { height: 37px; border: 2px solid #bbb; border-radius: 7px; background: linear-gradient(#fff, #f1f1f1); padding: 9px 0 0 8px; }
.obox i { display: block; width: 2px; height: 18px; background: #111; }
.book { left: 476px; top: 300px; width: 416px; height: 300px; background: #ccf; border: 1px solid #565b62; box-shadow: inset 5px 0 #cfc, inset -6px 0 #cfc, 0 6px 18px rgba(0,0,0,.4); }
.book-panel { margin: 0 9px; height: 300px; border: 1px solid #b2b2de; border-width: 0 2px; display: flex; padding: 235px 0 0 98px; gap: 94px; }
.book .jb:last-child { width: 76px; }
.jb { font: 12.200px "Liberation Sans", Arial, sans-serif; height: 24px; width: 58px; padding: 1px 0 0; border: 1px solid #73777e; border-radius: 5px; background: linear-gradient(#fdfdfd, #d6dae1 60%, #f2f4f7); color: #000; }
.student { left: 456px; top: 82px; width: 454px; height: 568px; background: #9f9; }
.student header { height: 30px; padding-right: 16px; }
.stu-body { margin: 6px; background: #66f; height: 524px; padding: 0 4px 5px 4px; }
h1 { margin: 0; padding-left: 3px; height: 22px; font: 700 17.500px/25px "DejaVu Sans Condensed", "Noto Sans", sans-serif; font-stretch: condensed; color: #f33; letter-spacing: -.1px; }
.student .panel { height: 496px; border: 1px solid #44b; border-radius: 6px; box-shadow: inset 0 1px 2px #4747c0, inset 0 0 2px #4747c0; padding: 75px 0 0 37px; display: grid; grid-template-columns: 135px 221px; grid-template-rows: 46px 50px 46px 44px 66px 24px; row-gap: 0; align-content: start; }
.student .panel > * { align-self: start; }
label { font: 12.300px/24px "DejaVu Sans Condensed", "Noto Sans", sans-serif; font-stretch: condensed; color: #111; letter-spacing: -.1px; }
label:first-child { padding-top: 1px; letter-spacing: .15px; }
input { width: 221px; height: 24px; border: 1px solid #bbc; border-top: 2px solid #888; margin: 0; outline: 0; background: #fff; }
.focus { box-shadow: 0 0 0 1px #71a4d8; }
.combo { height: 22px; border: 1px solid #555b66; border-radius: 5px; background: linear-gradient(#fdfdfd, #d6dae1 60%, #f2f4f7); font: 12.200px/21px "Liberation Sans", Arial, sans-serif; padding-left: 4px; display: flex; justify-content: space-between; overflow: hidden; color: #000; }
.combo i { width: 17px; background: linear-gradient(#d8e4ee, #8faabf 60%, #bed2e2); border-left: 1px solid #668; font-size: 10px; line-height: 19px; text-align: center; color: #111; }
.actions { grid-column: 1 / 3; display: flex; justify-content: space-between; margin: 0 -7px 0 2px; }
.actions .jb:last-child { width: 90px; }
.vscroll { width: 17px; height: 556px; margin-top: -5px; background: #f0f0f0; border-left: 1px solid #fff; display: flex; flex-direction: column; align-items: center; padding: 6px 0; }
.vscroll i { width: 15px; height: 373px; background: #cdcdcd; margin-top: 4px; }
.vscroll svg:last-child { margin-top: auto; }
.hscroll { height: 17px; background: #f0f0f0; display: flex; align-items: center; padding: 0 22px 0 5px; }
.hscroll i { width: 1288px; height: 15px; background: #cdcdcd; margin-left: 6px; }
.hscroll svg:last-child { margin-left: auto; }
.status { height: 26px; background: #f0f0f0; border-top: 1px solid #d7d7d7; display: flex; font-size: 11.400px; }
.status div { width: 156px; display: flex; align-items: center; gap: 6px; padding-left: 4px; border-right: 1px solid #dcdcdc; letter-spacing: -.3px; }
.status div:nth-child(n+2) { padding-left: 6px; }
.status .zoom.zoom { margin-left: auto; width: 199px; border: 0; border-left: 1px solid #dcdcdc; padding-left: 21px; gap: 7px; }
.taskbar { height: 30px; display: flex; padding-left: 1px; background: linear-gradient(90deg, #20353f, #1e313e 55%, #1a2744); }
.taskbar > span { width: 37.100px; display: flex; justify-content: center; align-items: center; }
.taskbar .u { background: linear-gradient(#76b9ed, #76b9ed) center bottom / 28px 2px no-repeat; }
.taskbar .act { background: linear-gradient(#76b9ed, #76b9ed) center bottom / 37px 2px no-repeat #52666f; }
.tray { margin-left: auto; display: flex; align-items: center; color: #fff; padding-right: 24px; font-size: 11.600px; letter-spacing: -.25px; }
.tray span { margin: 0 18px 0 9px; }
```
FILE: app.js
```js
// Both Paint windows share one title bar and ribbon.
const palette = ['#000', '#7f7f7f', '#880015', '#ed1c24', '#ff7f27', '#fff200', '#22b14c', '#00a2e8', '#3f48cc', '#a349a4',
  '#fff', '#c3c3c3', '#b97a57', '#ffaec9', '#ffc90e', '#efe4b0', '#b5e61d', '#99d9ea', '#7092be', '#c8bfe7'];
const tpl = document.getElementById('paint-top');
document.querySelectorAll('.paint').forEach((win) => {
  const top = tpl.content.cloneNode(true);
  top.querySelector('.wtitle').textContent = win.dataset.title;
  const pal = top.querySelector('.pal');
  for (let n = 0; n < 30; n += 1) {
    const sw = document.createElement('i');
    if (palette[n]) sw.style.background = palette[n];
    else sw.className = 'e';
    pal.appendChild(sw);
  }
  win.querySelector('.top').appendChild(top);
});
```
